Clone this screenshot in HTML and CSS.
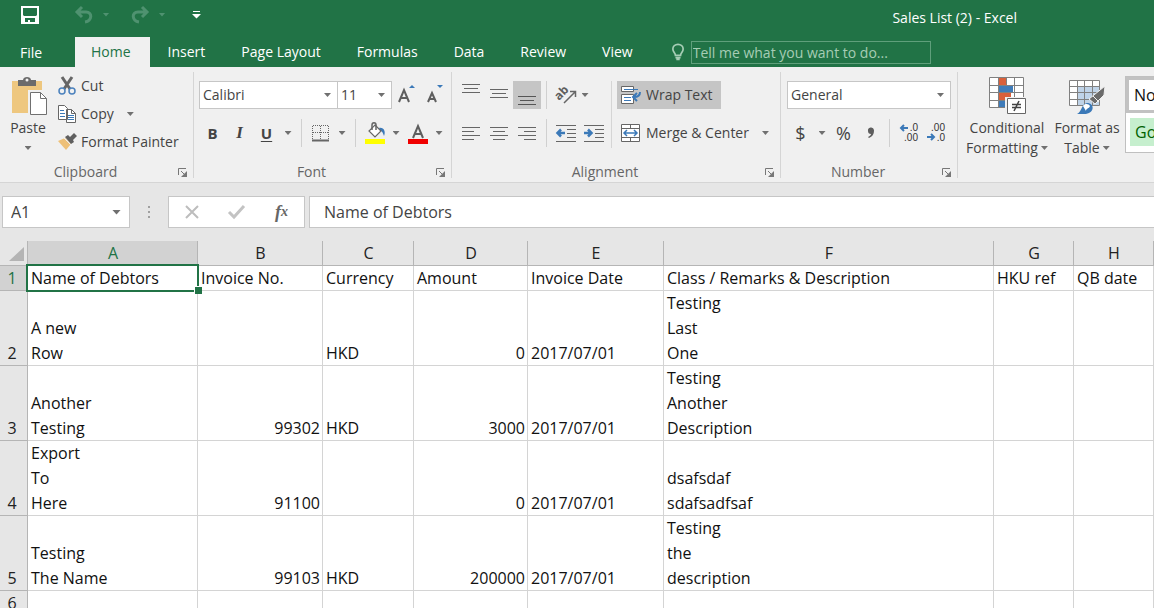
FILE: index.html
```html
<!DOCTYPE html>
<html lang="en">
<head>
<meta charset="utf-8">
<title>Sales List (2) - Excel</title>
<link rel="stylesheet" href="styles.css">
</head>
<body>
<header class="top">
  <div class="titlebar">
    <button class="qat" aria-label="Save"><svg width="20" height="20" viewBox="0 0 20 20"><path d="M1 1h18v18H1z" fill="#fff"/><path d="M3 3h14v7l-1 1H4l-1-1zM5 13h10v4h-5v-2H8v2H5z" fill="#217346"/></svg></button>
    <button class="qat faded" aria-label="Undo"><svg width="20" height="20" viewBox="0 0 20 20" fill="none" stroke="currentColor" stroke-width="3"><path d="M8 2 3 7l5 5M3 7h9c7 0 6 9-1 10"/></svg></button>
    <button class="arrow-btn faded" aria-label="Undo history"><i class="arrow"></i></button>
    <button class="qat faded redo" aria-label="Redo"><svg width="20" height="20" viewBox="0 0 20 20" fill="none" stroke="currentColor" stroke-width="3"><path d="m12 2 5 5-5 5M17 7H8C1 7 2 16 9 17"/></svg></button>
    <button class="arrow-btn faded" aria-label="Redo history"><i class="arrow"></i></button>
    <button class="qat customize" aria-label="Customize toolbar"><svg width="9" height="9" viewBox="0 0 9 9"><path d="M1 1h7v1H1zM0 4h9L4.500 8.500z" fill="#fff"/></svg></button>
    <span class="doc-title">Sales List (2) - Excel</span>
  </div>
  <nav class="tabs">
    <a class="tab file" href="#file">File</a>
    <a class="tab active" href="#home">Home</a>
    <a class="tab" href="#insert">Insert</a>
    <a class="tab" href="#layout">Page Layout</a>
    <a class="tab" href="#formulas">Formulas</a>
    <a class="tab" href="#data">Data</a>
    <a class="tab" href="#review">Review</a>
    <a class="tab" href="#view">View</a>
    <label class="tell"><svg width="12" height="18" viewBox="0 0 14 20" fill="none" stroke="#a6cdb5" stroke-width="2"><path d="M4 14c0-3-3-4-3-7.500a6 5.500 0 0 1 12 0C13 10 10 11 10 14zM4 16.500h6M5 18.500h4"/></svg>
    <input type="text" placeholder="Tell me what you want to do..." aria-label="Tell me what you want to do"></label>
  </nav>
</header>

<section class="ribbon" id="home">
  <div class="group clipboard">
    <div class="content side">
      <button class="big paste">
        <svg width="36" height="40" viewBox="0 0 36 40"><path d="M0 5h30v32H0z" fill="#eec77f"/><path d="M6 4h5c0-4 8-4 8 0h5v6H6z" fill="#6b6b6b"/><circle cx="15" cy="4" r="1.500" fill="#f0f0f0"/><path d="M16 14h14l6 7v19H16z" fill="#f0f0f0"/><path d="M18.500 16.500h10l6 6v16h-16z" fill="#fff" stroke="#707070"/><path d="M28.500 16.500v6h6" fill="none" stroke="#707070"/></svg>
        <span>Paste</span><i class="arrow"></i>
      </button>
      <div class="stack">
        <button class="line"><svg width="18" height="20" viewBox="0 0 18 20" fill="none"><path d="M4 1 12 13M14 1 6 13" stroke="#666" stroke-width="3"/><circle cx="4" cy="15" r="3" stroke="#4c82bd" stroke-width="1.500"/><circle cx="14" cy="15" r="3" stroke="#4c82bd" stroke-width="1.500"/></svg>Cut</button>
        <button class="line"><svg width="18" height="18" viewBox="0 0 18 18" fill="#fff" stroke="#666"><path d="M.5.500h6l3 3v11h-9zM8.500 4.500h5l4 4v9h-9z"/><path d="M13.500 4.500v4h4" fill="none"/><path d="M2 5.500h4M2 8.500h5M2 11.500h5M10 10.500h6M10 12.500h6M10 14.500h6" stroke="#3b79b8"/></svg>Copy<i class="arrow"></i></button>
        <button class="line"><svg width="18" height="18" viewBox="0 0 18 18"><path d="m0 8 7-3 6 6-5 6z" fill="#eec077"/><path d="m7 4 3-2 2 2 4-4 3 3-4 4 1 2-3 2z" fill="#5f5f5f"/><path d="m6 5 7 7" stroke="#f0f0f0"/></svg>Format Painter</button>
      </div>
    </div>
    <footer><span>Clipboard</span><button class="launch" aria-label="Clipboard options"><svg width="9" height="9"><use href="#launch"/></svg></button></footer>
  </div>

  <div class="group font">
    <div class="content">
      <div class="row">
        <span class="combo family"><select aria-label="Font"><option>Calibri</option></select></span>
        <span class="combo size"><select aria-label="Font size"><option>11</option></select></span>
        <button class="tool" aria-label="Increase font size"><svg width="18" height="22" viewBox="0 0 18 22"><path d="M2 18 7 6l5 12M4 14h6" fill="none" stroke="#5e5e5e" stroke-width="2"/><path d="m12 4 3-3 3 3z" fill="#3b79b8"/></svg></button>
        <button class="tool" aria-label="Decrease font size"><svg width="18" height="22" viewBox="0 0 18 22"><path d="m3 18 4-9 4 9M5 15h4" fill="none" stroke="#5e5e5e" stroke-width="2"/><path d="m12 1 3 3 3-3z" fill="#3b79b8"/></svg></button>
      </div>
      <div class="row">
        <button class="tool glyph bold">B</button>
        <button class="tool glyph italic">I</button>
        <button class="tool glyph under">U</button>
        <button class="arrow-btn" aria-label="Underline style"><i class="arrow"></i></button>
        <i class="rule"></i>
        <button class="tool" aria-label="Borders"><svg width="17" height="17" viewBox="0 0 17 17" fill="none" stroke="#666"><path d="M.5 1v13M8.500 1v13M16.500 1v13M1 .500h16M1 7.500h16" stroke-dasharray="1 1"/><path d="M0 15.500h17" stroke-width="2"/></svg></button>
        <button class="arrow-btn" aria-label="Border style"><i class="arrow"></i></button>
        <i class="rule"></i>
        <button class="tool" aria-label="Fill color"><svg width="20" height="22" viewBox="0 0 20 22"><path d="M14 6c5-1 7 4 5 8-1-3-2-5-4-6z" fill="#3b79b8"/><path d="m10 3 6 6-6 6-6-6z" fill="#fff" stroke="#666" stroke-width="1.200"/><path d="M7 8V3c0-3 4-3 4 0v5" fill="none" stroke="#666" stroke-width="1.500"/><path d="M0 17h20v5H0z" fill="#ff0"/></svg></button>
        <button class="arrow-btn" aria-label="Fill color list"><i class="arrow"></i></button>
        <button class="tool" aria-label="Font color"><svg width="20" height="22" viewBox="0 0 20 22"><path d="m5 16 5-12 5 12M7 12h6" fill="none" stroke="#5e5e5e" stroke-width="2"/><path d="M0 17h20v5H0z" fill="#f00000"/></svg></button>
        <button class="arrow-btn" aria-label="Font color list"><i class="arrow"></i></button>
      </div>
    </div>
    <footer><span>Font</span><button class="launch" aria-label="Font options"><svg width="9" height="9"><use href="#launch"/></svg></button></footer>
  </div>

  <div class="group alignment">
    <div class="content side">
      <div class="stack-two">
        <div class="row">
          <button class="tool" aria-label="Top align"><svg width="18" height="22" viewBox="0 0 18 22" stroke="#666"><path d="M0 .500h18M2 4.500h14M0 8.500h18"/></svg></button>
          <button class="tool" aria-label="Middle align"><svg width="18" height="22" viewBox="0 0 18 22" stroke="#666"><path d="M0 5.500h18M2 9.500h14M0 13.500h18"/></svg></button>
          <button class="tool pressed" aria-label="Bottom align"><svg width="18" height="22" viewBox="0 0 18 22" stroke="#555"><path d="M0 12.500h18M2 16.500h14M0 20.500h18"/></svg></button>
          <i class="rule"></i>
          <button class="tool" aria-label="Orientation"><svg width="22" height="22" viewBox="0 0 22 22"><text x="1" y="14" transform="rotate(-45 6 12)" class="ab">ab</text><path d="M9 19 20 8M15 7.500h5.500V13" fill="none" stroke="#666" stroke-width="1.500"/></svg></button>
          <button class="arrow-btn" aria-label="Orientation list"><i class="arrow"></i></button>
        </div>
        <div class="row">
          <button class="tool" aria-label="Align left"><svg width="18" height="14" viewBox="0 0 18 14" stroke="#666"><path d="M0 1.500h18M0 5.500h12M0 9.500h18M0 13.500h12"/></svg></button>
          <button class="tool" aria-label="Center"><svg width="18" height="14" viewBox="0 0 18 14" stroke="#666"><path d="M0 1.500h18M3 5.500h12M0 9.500h18M3 13.500h12"/></svg></button>
          <button class="tool" aria-label="Align right"><svg width="18" height="14" viewBox="0 0 18 14" stroke="#666"><path d="M0 1.500h18M6 5.500h12M0 9.500h18M6 13.500h12"/></svg></button>
          <i class="rule"></i>
          <button class="tool" aria-label="Decrease indent"><svg width="20" height="18" viewBox="0 0 20 18" fill="none" stroke="#666"><path d="M0 1.500h20M11 5.500h9M11 9.500h9M11 13.500h9M0 17.500h20"/><path d="M9 9H2M5 5.500 1.500 9 5 12.500" stroke="#3b79b8" stroke-width="2.500"/></svg></button>
          <button class="tool" aria-label="Increase indent"><svg width="20" height="18" viewBox="0 0 20 18" fill="none" stroke="#666"><path d="M0 1.500h20M11 5.500h9M11 9.500h9M11 13.500h9M0 17.500h20"/><path d="M0 9h7M4 5.500 7.500 9 4 12.500" stroke="#3b79b8" stroke-width="2.500"/></svg></button>
        </div>
      </div>
      <div class="stack-two wide">
        <div class="row"><button class="line wrap pressed"><svg width="20" height="20" viewBox="0 0 20 20" fill="#fff" stroke="#666"><path d="M.5 1.500h12v5H.5zM.5 9.500h12v9H.5z"/><path d="M3 4.500h14M3 12.500h7M3 15.500h7" stroke="#3b79b8"/><path d="M19 7c0 4-2 5-6 5M16 8l-4 4 4 4" fill="none" stroke="#3b79b8" stroke-width="2"/></svg>Wrap Text</button></div>
        <div class="row"><button class="line merge"><svg width="20" height="20" viewBox="0 0 20 20" fill="#fff" stroke="#666"><path d="M.5 1.500h18v17H.5zM.5 5.500h18M.5 14.500h18M9.500 1v4M9.500 15v4"/><path d="M3 10h13M6 7l-3 3 3 3M13 7l3 3-3 3" fill="none" stroke="#3b79b8" stroke-width="1.500"/></svg>Merge &amp; Center<i class="arrow"></i></button></div>
      </div>
    </div>
    <footer><span>Alignment</span><button class="launch" aria-label="Alignment options"><svg width="9" height="9"><use href="#launch"/></svg></button></footer>
  </div>

  <div class="group number">
    <div class="content">
      <div class="row"><span class="combo format"><select aria-label="Number format"><option>General</option></select></span></div>
      <div class="row">
        <button class="tool sign">$</button>
        <button class="arrow-btn" aria-label="Currency list"><i class="arrow"></i></button>
        <button class="tool sign">%</button>
        <button class="tool" aria-label="Comma style"><svg width="8" height="12" viewBox="0 0 8 12"><path d="M1 4a3 3 0 0 1 6-1c0 4-1 6-5 8l-1-1c2-1 3-2 3-3-2 0-3-1-3-3z" fill="#5e5e5e"/></svg></button>
        <i class="rule"></i>
        <button class="tool" aria-label="Increase decimal"><svg width="20" height="20" viewBox="0 0 20 20"><text x="19" y="8" text-anchor="end" class="dec">.0</text><text x="19" y="18" text-anchor="end" class="dec">.00</text><path d="M9 5H2M5 2 2 5l3 3" fill="none" stroke="#3b79b8" stroke-width="2"/></svg></button>
        <button class="tool" aria-label="Decrease decimal"><svg width="20" height="20" viewBox="0 0 20 20"><text x="19" y="8" text-anchor="end" class="dec">.00</text><text x="19" y="18" text-anchor="end" class="dec">.0</text><path d="M1 14h7M5 11l3 3-3 3" fill="none" stroke="#3b79b8" stroke-width="2"/></svg></button>
      </div>
    </div>
    <footer><span>Number</span><button class="launch" aria-label="Number options"><svg width="9" height="9"><use href="#launch"/></svg></button></footer>
  </div>

  <div class="group styles">
    <div class="content side">
      <button class="big">
        <svg width="38" height="40" viewBox="0 0 38 40"><path d="M1.500 1.500h34v30h-34z" fill="#fff"/><path d="M11 2h8v7h-8zM11 17h12v7H11z" fill="#d9603b"/><path d="M11 9h14v8H11zM11 24h6v8h-6z" fill="#3f7cba"/><path d="M1.500 1.500h34v30h-34zM10.500 1.500v30M18.500 1.500v7M26.500 1.500v30M1.500 9.500h34M1.500 16.500h34M1.500 24.500h34" fill="none" stroke="#808080"/><path d="M17 21h21v19H17z" fill="#f0f0f0"/><path d="M19.500 22.500h18v15h-18z" fill="#fff" stroke="#666"/><path d="M24 28.500h9M24 31.500h9M31 25l-5 10" stroke="#444" stroke-width="1.500"/></svg>
        <span>Conditional</span><span>Formatting<i class="arrow"></i></span>
      </button>
      <button class="big table">
        <svg width="38" height="40" viewBox="0 0 38 40"><path d="M1.500 4.500h30v25h-30z" fill="#fff"/><path d="M9 11h22v18H9z" fill="#bfd3e8"/><path d="M1.500 4.500h30v25h-30zM9.500 4.500v25M16.500 4.500v25M24.500 4.500v25M1.500 10.500h30M1.500 16.500h30M1.500 23.500h30" fill="none" stroke="#808080"/><path d="m37 10-1 9-9 9-6-5z" fill="#6b6b6b" stroke="#f0f0f0"/><path d="m25 20 6 6" stroke="#f0f0f0"/><path d="M9 38c5-2 4-10 10-11 8 0 8 11-3 11z" fill="#3b79b8"/><path d="M15 30c2-3 6-2 7 0-1 3-4 2-4 5" fill="#fff"/></svg>
        <span>Format as</span><span>Table<i class="arrow"></i></span>
      </button>
      <div class="gallery"><button class="normal">Normal</button><button class="good">Good</button></div>
    </div>
  </div>
</section>

<section class="formula-bar">
  <span class="combo name"><input type="text" value="A1" aria-label="Name box"></span>
  <svg class="dots" width="4" height="14" viewBox="0 0 4 14" fill="#a0a0a0"><path d="M1 1h2v2H1zM1 6h2v2H1zM1 11h2v2H1z"/></svg>
  <div class="entry">
    <button aria-label="Cancel"><svg width="14" height="14" viewBox="0 0 14 14" stroke="#bdbdbd" stroke-width="2"><path d="m1 1 12 12M13 1 1 13"/></svg></button>
    <button aria-label="Enter"><svg width="17" height="14" viewBox="0 0 17 14" fill="none" stroke="#c3c3c3" stroke-width="3"><path d="m1 7 5 5L16 1"/></svg></button>
    <button class="fx" aria-label="Insert function">f<small>x</small></button>
  </div>
  <input class="formula" type="text" value="Name of Debtors" aria-label="Formula">
</section>

<main>
<table class="sheet">
  <colgroup><col class="c-row"><col class="c-a"><col class="c-b"><col class="c-c"><col class="c-d"><col class="c-e"><col class="c-f"><col class="c-g"><col></colgroup>
  <thead><tr><th class="corner"><svg width="15" height="14" viewBox="0 0 15 14"><path d="M15 0v14H0z" fill="#b4b4b4"/></svg></th><th class="on">A</th><th>B</th><th>C</th><th>D</th><th>E</th><th>F</th><th>G</th><th>H</th></tr></thead>
  <tbody>
    <tr><th class="on">1</th><td class="selected">Name of Debtors</td><td>Invoice No.</td><td>Currency</td><td>Amount</td><td>Invoice Date</td><td>Class / Remarks &amp; Description</td><td>HKU ref</td><td>QB date</td></tr>
    <tr><th>2</th><td>A new<br>Row</td><td></td><td>HKD</td><td class="num">0</td><td>2017/07/01</td><td>Testing<br>Last<br>One</td><td></td><td></td></tr>
    <tr><th>3</th><td>Another<br>Testing</td><td class="num">99302</td><td>HKD</td><td class="num">3000</td><td>2017/07/01</td><td>Testing<br>Another<br>Description</td><td></td><td></td></tr>
    <tr><th>4</th><td>Export<br>To<br>Here</td><td class="num">91100</td><td></td><td class="num">0</td><td>2017/07/01</td><td>dsafsdaf<br>sdafsadfsaf</td><td></td><td></td></tr>
    <tr><th>5</th><td>Testing<br>The Name</td><td class="num">99103</td><td>HKD</td><td class="num">200000</td><td>2017/07/01</td><td>Testing<br>the<br>description</td><td></td><td></td></tr>
    <tr><th>6</th><td></td><td></td><td></td><td></td><td></td><td></td><td></td><td></td></tr>
  </tbody>
</table>
</main>
<svg class="defs" width="0" height="0"><symbol id="launch" viewBox="0 0 9 9"><path d="M.5 7V.5H8M3 3l4 4" fill="none" stroke="#777"/><path d="M9 3v6H3z" fill="#777"/></symbol></svg>
</body>
</html>
```

FILE: styles.css
```css
* { box-sizing: border-box; }
body {
  margin: 0;
  height: 100vh;
  overflow: hidden;
  font: 14px/20px "Open Sans", "Noto Sans", sans-serif;
  color: #444;
  background: #fff;
}
button, input, select { font: inherit; color: inherit; border: 0; background: none; padding: 0; margin: 0; border-radius: 0; }
button { display: flex; align-items: center; justify-content: center; white-space: nowrap; }
svg { display: block; flex: none; overflow: visible; }
.defs { position: absolute; }

.arrow { display: block; flex: none; width: 7px; height: 4px; background: currentColor; clip-path: polygon(0 0, 100% 0, 50% 100%); }
.arrow-btn { width: 16px; height: 28px; flex: none; }

/* Title bar and tabs */
.top { background: #217346; color: #fff; }
.titlebar { display: flex; align-items: center; height: 37px; padding: 0 137px 8px 20px; }
.titlebar .arrow-btn { width: 24px; }
.qat { width: 20px; height: 20px; }
.qat.faded { margin-left: 34px; }
.faded { color: #4f9270; }
.titlebar .redo { margin-left: 12px; }
.customize { margin-left: 12px; }
.doc-title { margin-left: auto; padding-top: 6px; }
.tabs { display: flex; height: 30px; padding-right: 24px; }
.tab { padding: 5px 18px; color: #fff; text-decoration: none; white-space: nowrap; }
.tab.file { width: 75px; padding: 6px 20px; }
.tab.active { background: #f0f0f0; color: #217346; padding: 5px 19px 5px 16px; }
.tell { display: flex; align-items: center; gap: 7px; padding-left: 21px; }
.tell input { width: 240px; height: 23px; border: 1px solid #5f9f7b; padding: 0 1px; }
.tell input::placeholder { color: #a6cdb5; opacity: 1; }

/* Ribbon */
.ribbon { display: flex; background: #f0f0f0; border-bottom: 1px solid #d5d5d5; height: 116px; padding: 5px 0 4px; overflow: hidden; }
.ribbon .arrow { background: #707070; }
.group { display: flex; flex-direction: column; flex: none; border-right: 1px solid #d5d5d5; }
.clipboard { width: 194px; }
.font { width: 258px; }
.alignment { width: 329px; }
.number { width: 177px; }
.styles { flex: 1; border: 0; min-width: 0; }
.content { flex: 1; padding: 9px 0 0 5px; }
.content.side { display: flex; }
.group footer { display: flex; height: 20px; padding-top: 8px; line-height: 12px; color: #666; text-align: center; }
.group footer span { flex: 1; }
.launch { width: 22px; height: 12px; }
.row { display: flex; align-items: center; height: 28px; }
.row + .row { margin-top: 10px; }
.tool { width: 28px; height: 28px; flex: none; }
.rule { width: 1px; height: 28px; background: #d0d0d0; margin: 0 5px; flex: none; }
.pressed { background: #c5c5c5; }
.line { gap: 5px; height: 28px; }
.line .arrow { margin-left: 8px; }
.combo { display: grid; flex: none; align-items: center; background: #fff; border: 1px solid #c6c6c6; height: 28px; }
.combo > *, .combo::after { grid-area: 1 / 1; }
.combo > * { width: 100%; height: 100%; padding: 0 3px; appearance: none; }
.combo::after { content: ""; width: 7px; height: 4px; margin-right: 6px; justify-self: end; background: #707070; clip-path: polygon(0 0, 100% 0, 50% 100%); pointer-events: none; }
.family { width: 139px; }
.size { width: 54px; border-left: 0; }
.format { width: 164px; }

.clipboard .content { padding: 0 0 0 5px; gap: 7px; }
.big { flex-direction: column; justify-content: flex-start; }
.big span { display: flex; align-items: center; gap: 3px; }
.paste { width: 46px; padding-top: 4px; }
.paste svg { margin-left: 4px; }
.paste span { margin: 2px 0 8px; }
.stack .line { height: 28px; }

.font .row + .row .tool { width: 27px; }
.glyph { font-size: 15px; font-weight: 700; }
.italic { font-family: "Liberation Serif", serif; font-style: italic; font-size: 17px; }
.under { text-decoration: underline; text-underline-offset: 2px; }

.alignment .arrow-btn { width: 10px; }
.stack-two.wide { border-left: 1px solid #d5d5d5; height: 67px; padding-left: 5px; margin-left: auto; width: 169px; }
.wrap { padding: 0 8px 0 4px; }
.merge { padding-left: 4px; }
.number .content { padding-left: 6px; }
.number .tool { width: 27px; }
.sign { font-size: 18px; }
.ab { font: 700 12px "Open Sans", sans-serif; fill: #5e5e5e; }
.dec { font: 10px "Liberation Sans", sans-serif; fill: #333; }

.styles .content { padding: 4px 0 0 7px; gap: 3px; }
.styles .big { width: 84px; }
.styles .big.table { width: 70px; }
.styles .big span:first-of-type { margin-top: 2px; }
.gallery { flex: 1; min-width: 0; height: 77px; border: 1px solid #c0c0c0; border-right: 0; background: #fff; overflow: hidden; font-size: 16px; }
.gallery button { width: 84px; padding-left: 5px; justify-content: flex-start; }
.normal { height: 36px; border: 3px solid #c2c2c2; color: #111; }
.gallery .good { height: 28px; margin: 5px 0 0 4px; background: #c6efce; color: #006100; }

/* Formula bar */
.formula-bar { display: flex; align-items: center; background: #e6e6e6; height: 58px; padding: 0 0 0 2px; font-size: 16px; }
.name { width: 128px; height: 32px; background: #fff; }
.name > input { padding: 0 8px; }
.name::after { width: 9px; height: 5px; margin-right: 8px; }
.dots { margin: 0 17px; }
.entry { display: flex; width: 137px; height: 32px; background: #fff; border: 1px solid #c6c6c6; margin-right: 4px; }
.entry button { flex: 1; }
.entry .fx { font: italic 700 18px "Liberation Serif", serif; color: #666; }
.fx small { font-size: 14px; }
.formula { flex: 1; min-width: 0; height: 32px; background: #fff; border: 1px solid #c6c6c6; border-right: 0; padding: 0 14px; }

/* Worksheet */
.sheet { width: 100%; table-layout: fixed; border-spacing: 0; font-size: 16px; line-height: 25px; color: #111; }
.c-row { width: 28px; }
.c-a { width: 170px; }
.c-b { width: 125px; }
.c-c { width: 91px; }
.c-d { width: 114px; }
.c-e { width: 136px; }
.c-f { width: 330px; }
.c-g { width: 80px; }
.sheet td { height: 25px; padding: 0 3px; vertical-align: bottom; white-space: nowrap; box-shadow: inset -1px -1px #d4d4d4; }
.sheet th { height: 25px; padding: 0; font-weight: 400; vertical-align: bottom; background: #e6e6e6; box-shadow: inset -1px -1px #b5b5b5; color: #222; }
.sheet tbody th { padding-right: 4px; }
.sheet th.on { background: #d2d2d2; color: #217346; }
.sheet th.corner { padding: 0 4px 5px 9px; }
.sheet .num { text-align: right; }
.sheet .selected { position: relative; }
.selected::before { content: ""; position: absolute; inset: -2px -1px -1px -2px; border: 2px solid #217346; }
.selected::after { content: ""; position: absolute; right: -4px; bottom: -3px; width: 7px; height: 7px; background: #217346; border: 1px solid #fff; border-width: 1px 0 0 1px; }
```
